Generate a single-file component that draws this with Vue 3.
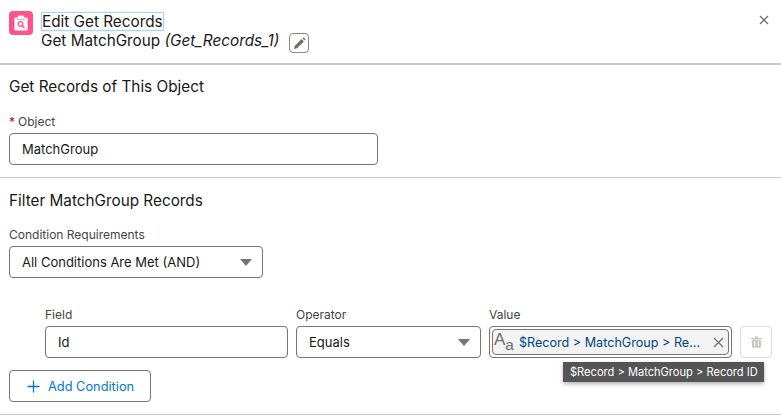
<script setup>
const fields = [
  { label: 'Field', value: 'Id' },
]
</script>

<template>
  <div class="page">
    <header class="head">
      <span class="logo">
        <svg width="14" height="16" viewBox="0 0 14 16">
          <path d="M1.600 2.400H4V1.400C4 .8 4.400.4 5 .4h4c.6 0 1 .4 1 1v1h2.400c.7 0 1.200.5 1.200 1.200v10.600c0 .7-.5 1.200-1.200 1.200H1.600c-.7 0-1.200-.5-1.200-1.200V3.600c0-.7.5-1.200 1.200-1.200z" fill="#fff"/>
          <rect x="3" y="4" width="8" height="1" fill="#ff538a" opacity=".55"/>
          <circle cx="6.500" cy="9" r="2.300" fill="none" stroke="#ff538a" stroke-width="1.300"/>
          <path d="M8.200 10.700l2 2" stroke="#ff538a" stroke-width="1.400" stroke-linecap="round"/>
        </svg>
      </span>
      <div class="titles">
        <h1 class="title">Edit Get Records</h1>
        <div class="sub">
          <span>Get MatchGroup <i>(Get_Records_1)</i></span>
          <button class="edit" type="button" aria-label="Edit">
            <svg width="13" height="13" viewBox="0 0 13 13"><path d="M1 12l.7-3L8.600 2.100l2.300 2.300L4 11.300zM9.400 1.300l.6-.5c.3-.3.700-.3 1 0l1.200 1.200c.3.300.3.700 0 1l-.6.600z" fill="#706e6b"/></svg>
          </button>
        </div>
      </div>
      <button class="close" type="button" aria-label="Close">
        <svg width="10" height="10" viewBox="0 0 10 10"><path d="M1 1l8 8M9 1l-8 8" stroke="#706e6b" stroke-width="1.300"/></svg>
      </button>
    </header>

    <section class="sec first">
      <h2>Get Records of This Object</h2>
      <label class="lab"><span class="req">*</span>Object</label>
      <div class="input obj">MatchGroup</div>
    </section>

    <section class="sec second">
      <h2>Filter MatchGroup Records</h2>
      <label class="lab">Condition Requirements</label>
      <div class="input select req-sel">All Conditions Are Met (AND)<span class="caret"></span></div>

      <div class="row">
        <div class="col c1" v-for="f in fields" :key="f.label">
          <label class="lab">{{ f.label }}</label>
          <div class="input">{{ f.value }}</div>
        </div>
        <div class="col c2">
          <label class="lab">Operator</label>
          <div class="input select">Equals<span class="caret"></span></div>
        </div>
        <div class="col c3">
          <label class="lab">Value</label>
          <div class="input pillbox">
            <div class="pill">
              <span class="aa"><span class="big">A</span><span class="small">a</span></span>
              <span class="ptext">$Record &gt; MatchGroup &gt; Re...</span>
              <svg class="px" width="11" height="11" viewBox="0 0 11 11"><path d="M1 1l9 9M10 1l-9 9" stroke="#706e6b" stroke-width="1.200"/></svg>
            </div>
          </div>
          <div class="tip">$Record &gt; MatchGroup &gt; Record ID</div>
        </div>
        <button class="trash" type="button" aria-label="Delete">
          <svg width="11" height="12" viewBox="0 0 11 12">
            <path d="M0 2h11v1H0zM4 .4h3V2H4z" fill="#c9c7c5"/>
            <path d="M1 3.600h9v7.200c0 .6-.4 1-1 1H2c-.6 0-1-.4-1-1zM3.200 5v5h1V5zm3.600 0v5h1V5z" fill="#c9c7c5" fill-rule="evenodd"/>
          </svg>
        </button>
      </div>

      <button class="add" type="button">
        <svg width="13" height="13" viewBox="0 0 13 13"><path d="M6.500 .5v12M.5 6.500h12" stroke="#0176d3" stroke-width="1.300"/></svg>
        Add Condition
      </button>
    </section>
  </div>
</template>

<style>
html, body { margin: 0; background: #fff; overflow: hidden; }
</style>

<style scoped>
.page {
  width: 781px;
  height: 415px;
  overflow: hidden;
  box-sizing: border-box;
  font-family: "Inter", "Liberation Sans", sans-serif;
  color: #181818;
  font-size: 13px;
}
button { font-family: inherit; background: #fff; padding: 0; }
.head {
  display: flex;
  gap: 8px;
  height: 65px;
  box-sizing: border-box;
  padding: 11px 0 0 9px;
  border-bottom: 2px solid #c9c9c9;
  position: relative;
}
.logo {
  width: 24px;
  height: 24px;
  border-radius: 4px;
  background: #ff538a;
  display: flex;
  align-items: center;
  justify-content: center;
}
.titles { display: flex; flex-direction: column; }
.title {
  margin: 1px 0 0;
  font-size: 15.300px;
  font-weight: 400;
  line-height: 17px;
  align-self: flex-start;
  border: 1px solid #a9d3f5;
  box-shadow: 0 0 2px #cfe6fa;
  padding: 0;
}
.sub {
  display: flex;
  align-items: flex-start;
  gap: 10px;
  font-size: 15.300px;
  line-height: 20px;
}
.edit {
  width: 20px;
  height: 20px;
  margin-top: 2px;
  border: 1px solid #8a8886;
  border-radius: 4px;
  display: flex;
  align-items: center;
  justify-content: center;
}
.close {
  position: absolute;
  right: 12px;
  top: 15px;
  border: 0;
  width: 10px;
  height: 10px;
  display: flex;
}
.sec { padding: 0 9px; border-bottom: 1px solid #c9c9c9; box-sizing: border-box; }
.first { height: 113px; }
.second { height: 237px; position: relative; }
h2 { margin: 0; font-size: 15.300px; font-weight: 400; line-height: 20px; }
.first h2 { padding-top: 12px; }
.second h2 { padding-top: 13px; }
.lab { display: block; font-size: 12px; line-height: 16px; color: #444; }
.first .lab { margin-top: 17px; }
.second > .lab { margin-top: 16px; }
.req { color: #ba0517; margin-right: 3px; }
.input {
  height: 32px;
  box-sizing: border-box;
  border: 1px solid #747474;
  border-radius: 4px;
  display: flex;
  align-items: center;
  padding: 0 12px;
  position: relative;
  background: #fff;
  margin-top: 3px;
}
.obj { width: 369px; }
.req-sel { width: 254px; }
.caret {
  position: absolute;
  right: 10px;
  top: 12px;
  width: 0;
  height: 0;
  border-left: 6px solid transparent;
  border-right: 6px solid transparent;
  border-top: 7px solid #747474;
}
.row { display: flex; margin: 29px 0 0 36px; gap: 8px; align-items: flex-end; }
.c1 { width: 243px; }
.c2 { width: 185px; }
.c3 { width: 243px; position: relative; }
.pillbox { padding: 2px; }
.pill {
  flex: 1;
  height: 26px;
  border: 1px solid #747474;
  border-radius: 4px;
  background: #f3f3f3;
  display: flex;
  align-items: center;
  box-sizing: border-box;
  padding: 0 4px 0 1px;
  color: #014486;
  min-width: 0;
}
.aa { color: #706e6b; width: 25px; flex: none; display: flex; align-items: baseline; font-family: "Liberation Sans", sans-serif; }
.big { font-size: 17px; position: relative; top: -2px; }
.small { font-size: 15.500px; position: relative; top: 3px; }
.ptext { flex: 1; font-size: 12.600px; white-space: nowrap; overflow: hidden; }
.tip {
  position: absolute;
  left: 74px;
  top: 55px;
  height: 20px;
  width: 201px;
  box-sizing: border-box;
  background: #555;
  color: #fff;
  font-size: 11.100px;
  line-height: 20px;
  padding-left: 7px;
  white-space: nowrap;
  box-shadow: 0 2px 4px rgba(0,0,0,.3);
  z-index: 2;
}
.trash {
  width: 32px;
  height: 32px;
  border: 1px solid #dcdcdc;
  border-radius: 4px;
  display: flex;
  align-items: center;
  justify-content: center;
  flex: none;
}
.add {
  margin-top: 12px;
  width: 142px;
  height: 32px;
  border: 1px solid #747474;
  border-radius: 4px;
  color: #0176d3;
  font-size: 12.800px;
  display: flex;
  align-items: center;
  gap: 8px;
  padding-left: 17px;
  box-sizing: border-box;
}
</style>
